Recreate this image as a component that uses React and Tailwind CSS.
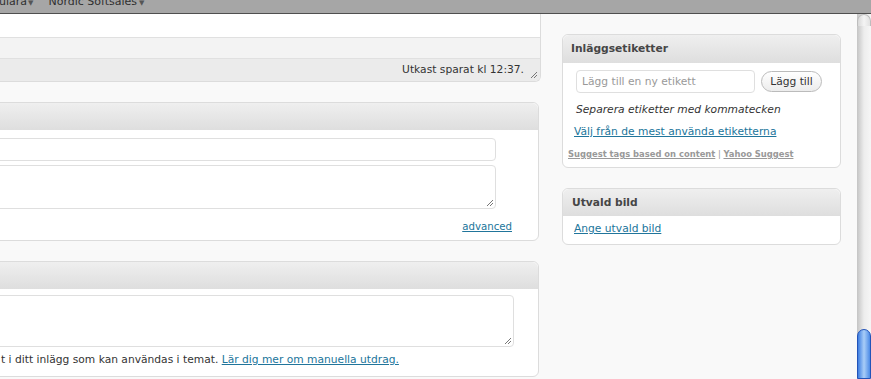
import React from 'react';

function Grip({ className = '' }) {
  return (
    <svg width="9" height="9" viewBox="0 0 9 9" className={className}>
      <path d="M8 2 L2 8 M8 5 L5 8" stroke="#777" strokeWidth="1" />
    </svg>
  );
}

function AdminBar() {
  return (
    <div className="h-[14px] bg-[#a6a6a6] border-b border-[#4f4f4f] overflow-hidden">
      <div className="flex items-start mt-[-4px] leading-[11px] text-[11px] text-[#2f2f2f]">
        <span className="ml-[-1px]">ulära<span className="text-[7px] text-[#555] ml-[1px]">▼</span></span>
        <span className="ml-[15px]">Nordic Softsales<span className="text-[7px] text-[#555] ml-[2px]">▼</span></span>
      </div>
    </div>
  );
}

function PanelHeader({ children }) {
  return (
    <div className="h-[27px] bg-gradient-to-b from-[#efefef] to-[#dedede] rounded-t-[6px] flex items-center px-[9px] font-bold text-[#464646] text-[10.7px]">
      {children}
    </div>
  );
}

function LeftColumn() {
  return (
    <div className="ml-[-20px] w-[561px] shrink-0 flex flex-col">
      <div className="border-r border-b border-[#dcdcdc] rounded-br-[6px] overflow-hidden">
        <div className="h-[23px] bg-white" />
        <div className="h-[21px] bg-[#f3f3f3] border-t border-[#e0e0e0]" />
        <div className="h-[23px] bg-[#ebebeb] border-t border-[#e0e0e0] flex items-center justify-end">
          <span className="mr-[5px]">Utkast sparat kl 12:37.</span>
          <Grip className="mr-[2px] mt-[9px]" />
        </div>
      </div>

      <div className="mt-[20px] mr-[2px] border border-[#dcdcdc] rounded-[6px] bg-white">
        <PanelHeader />
        <div className="pt-[8px] pr-[42px] flex flex-col gap-[4px]">
          <div className="h-[23px] border border-[#dfdfdf] rounded-[4px] bg-white" />
          <div className="relative h-[44px] border border-[#dfdfdf] rounded-[4px] bg-white">
            <Grip className="absolute right-[1px] bottom-[1px]" />
          </div>
        </div>
        <div className="flex justify-end pr-[26px] pt-[11px] h-[31px]">
          <a className="text-[#21759b] underline text-[10.2px]">advanced</a>
        </div>
      </div>

      <div className="mt-[20px] mr-[2px] border border-[#dcdcdc] rounded-[6px] bg-white">
        <PanelHeader />
        <div className="pt-[6px] pr-[24px]">
          <div className="relative h-[52px] border border-[#dfdfdf] rounded-[4px] bg-white">
            <Grip className="absolute right-[1px] bottom-[1px]" />
          </div>
        </div>
        <p className="h-[29px] pt-[6px] whitespace-nowrap pl-[20px]">
          t i ditt inlägg som kan användas i temat. <a className="text-[#21759b] underline">Lär dig mer om manuella utdrag.</a>
        </p>
      </div>
    </div>
  );
}

function Sidebar() {
  return (
    <div className="ml-[21px] w-[279px] shrink-0 flex flex-col pt-[20px]">
      <div className="border border-[#dcdcdc] rounded-[6px] bg-white">
        <div className="h-[28px] bg-gradient-to-b from-[#efefef] to-[#dedede] rounded-t-[6px] flex items-center px-[8px] font-bold text-[#464646] text-[10.7px]">
          Inläggsetiketter
        </div>
        <div className="pl-[13px] pt-[7px]">
          <div className="flex items-center gap-[6px]">
            <div className="w-[179px] h-[23px] border border-[#dfdfdf] rounded-[4px] bg-white flex items-center pl-[5px] text-[#999]">
              Lägg till en ny etikett
            </div>
            <div className="w-[61px] h-[21px] border border-[#bbb] rounded-full bg-gradient-to-b from-white to-[#ececec] flex items-center justify-center text-[#333]">
              Lägg till
            </div>
          </div>
          <p className="italic mt-[9px] leading-[15px]">Separera etiketter med kommatecken</p>
          <a className="block mt-[7px] ml-[-2px] leading-[15px] text-[#21759b] underline">Välj från de mest använda etiketterna</a>
        </div>
        <div className="pl-[5px] pt-[9px] pb-[7px] text-[8.4px] leading-[12px] font-bold text-[#999]">
          <a className="underline">Suggest tags based on content</a>
          <span className="font-normal"> | </span>
          <a className="underline">Yahoo Suggest</a>
        </div>
      </div>

      <div className="mt-[20px] border border-[#dcdcdc] rounded-[6px] bg-white">
        <PanelHeader>Utvald bild</PanelHeader>
        <div className="pl-[11px] pt-[6px] pb-[8px] leading-[14px]">
          <a className="text-[#21759b] underline">Ange utvald bild</a>
        </div>
      </div>
    </div>
  );
}

function Scrollbar() {
  return (
    <div className="w-[14px] shrink-0 flex flex-col bg-gradient-to-r from-[#c4c4c4] via-[#ededed] to-[#f6f6f6]">
      <div className="h-[12px] rounded-t-full border-t border-x border-[#bdbdbd] bg-gradient-to-r from-[#d8d8d8] via-[#f4f4f4] to-[#e2e2e2]" />
      <div className="h-[303px]" />
      <div className="flex-1 rounded-t-full border border-[#2353b8] bg-gradient-to-r from-[#3d7de0] via-[#a9cdf7] to-[#4b8ae6]" />
    </div>
  );
}

export default function App() {
  return (
    <div className="w-[871px] h-[379px] overflow-hidden bg-[#f9f9f9] text-[10.7px] leading-[14px] text-[#333] font-['DejaVu_Sans',sans-serif]">
      <AdminBar />
      <div className="flex h-[365px]">
        <div className="flex-1 flex overflow-hidden">
          <LeftColumn />
          <Sidebar />
        </div>
        <Scrollbar />
      </div>
    </div>
  );
}
